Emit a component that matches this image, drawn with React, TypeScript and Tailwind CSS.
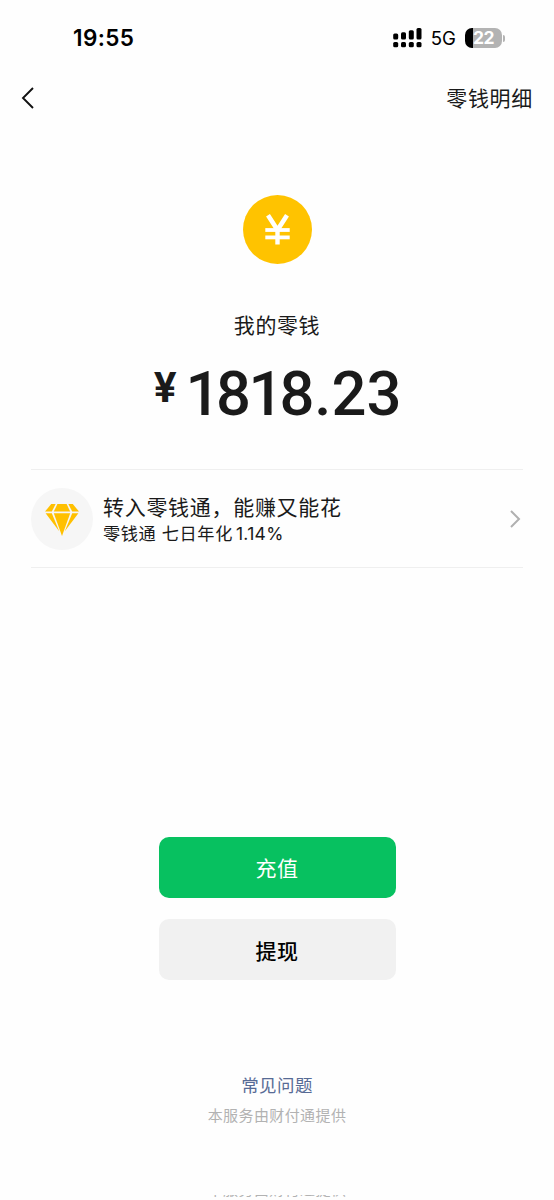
import React from 'react';

function SignalIcon() {
  return (
    <svg className="h-[20px] w-[29px] shrink-0" viewBox="0 0 29 20" fill="#000">
      <rect x="0.2" y="5.6" width="5" height="6" rx="1.5" />
      <rect x="8" y="4.2" width="5" height="7.4" rx="1.5" />
      <rect x="15.8" y="2.2" width="5" height="9.4" rx="1.5" />
      <rect x="23.5" y="0" width="5" height="11.6" rx="1.5" />
      <rect x="0.2" y="14" width="5" height="5.2" rx="1.5" />
      <rect x="8" y="14" width="5" height="5.2" rx="1.5" />
      <rect x="15.8" y="14" width="5" height="5.2" rx="1.5" />
      <rect x="23.5" y="14" width="5" height="5.2" rx="1.5" />
    </svg>
  );
}

function Battery() {
  return (
    <div className="ml-[9px] flex items-center">
      <div className="flex h-[20px] w-[37px] items-center justify-center overflow-hidden rounded-[7px] bg-[linear-gradient(to_right,#000_8px,#b3b3b3_8px)]">
        <span className="text-[17.5px] leading-none font-bold tracking-[-0.4px] text-white">22</span>
      </div>
      <div className="ml-px h-[7px] w-[2px] rounded-r-full bg-[#b3b3b3]" />
    </div>
  );
}

function StatusBar() {
  return (
    <div className="flex h-[76px] shrink-0 items-center justify-between pr-[49px] pl-[73px]">
      <span className="text-[22.5px] leading-none font-semibold tracking-[0.4px] text-black">19:55</span>
      <div className="flex items-center">
        <SignalIcon />
        <span className="ml-[9px] text-[18.6px] leading-none text-black">5G</span>
        <Battery />
      </div>
    </div>
  );
}

function CoinIcon() {
  return (
    <svg className="size-[69px]" viewBox="0 0 69 69" fill="none" stroke="#fff" strokeWidth="4.6">
      <circle cx="34.5" cy="34.5" r="34.5" fill="#ffc300" stroke="none" />
      <path d="M25 20.2L34.5 35L44 20.2" />
      <path d="M34.5 34V49.5" strokeWidth="4.4" />
      <path d="M22.3 35H46.7" strokeWidth="3.8" />
      <path d="M22.3 42.4H46.7" strokeWidth="3.8" />
    </svg>
  );
}

function DiamondIcon() {
  return (
    <svg className="mt-[3px] h-[32px] w-[34px]" viewBox="0 0 34 32" fill="#ffc000">
      <path d="M6.2 0H10.6L6.8 7.6H0Z" />
      <path d="M12.4 0H21.6L25.2 7.6H8.8Z" />
      <path d="M23.4 0H27.8L34 7.6H27.2Z" />
      <path d="M0.6 9.2H6.8L14.2 27.2Z" />
      <path d="M8.8 9.2H25.2L17 32Z" />
      <path d="M27.2 9.2H33.4L19.8 27.2Z" />
    </svg>
  );
}

export default function App() {
  return (
    <div className="flex h-[1200px] w-[554px] flex-col overflow-hidden bg-[#fefefe] font-[Inter,'Noto_Sans_CJK_SC',sans-serif] text-[#1a1a1a]">
      <StatusBar />

      <header className="flex h-[44px] shrink-0 items-center justify-between px-[21px]">
        <svg className="h-[22px] w-[14px]" viewBox="0 0 14 22" fill="none" stroke="#111" strokeWidth="1.9">
          <path d="M12 1L2 11L12 21" />
        </svg>
        <span className="text-[21px] leading-none tracking-[0.7px]">零钱明细</span>
      </header>

      <div className="mt-[75px] flex flex-col items-center">
        <CoinIcon />
        <div className="mt-[46px] h-[32px] text-[21px] leading-[32px] tracking-[0.6px]">我的零钱</div>
        <div className="mt-[19px] flex h-[66px] w-[247px] items-start">
          <span className="mt-[6px] w-[32px] shrink-0 text-[41px] leading-none font-bold">¥</span>
          <div className="font-[Roboto,sans-serif] text-[61.5px] leading-[66px] font-medium whitespace-nowrap">
            <span className="tracking-[-4.5px]">1</span>
            <span className="tracking-[-2.5px]">8</span>
            <span className="tracking-[-4px]">1</span>
            <span>8.23</span>
          </div>
        </div>
      </div>

      <div className="mx-[31px] mt-[42px] flex h-[99px] shrink-0 items-center border-y border-[#efefef]">
        <div className="flex size-[62px] items-center justify-center rounded-full bg-[#f6f6f6]">
          <DiamondIcon />
        </div>
        <div className="ml-[10px] flex-1 pt-[2px]">
          <div className="text-[21px] leading-[28px] tracking-[0.7px]">转入零钱通，能赚又能花</div>
          <div className="text-[17.2px] leading-[24px] tracking-[0.6px]">
            零钱通 七日年化<span className="ml-[3px] text-[17.5px] tracking-[0.3px]">1.14%</span>
          </div>
        </div>
        <svg className="mr-[2px] h-[18px] w-[11px]" viewBox="0 0 11 18" fill="none" stroke="#b0b0b0" strokeWidth="2">
          <path d="M1 1L9 9L1 17" />
        </svg>
      </div>

      <div className="mt-[269px] flex flex-col items-center gap-[21px]">
        <button className="h-[61px] w-[237px] rounded-[10px] bg-[#07c160] pt-[3px] text-[21px] tracking-[0.6px] text-white">
          充值
        </button>
        <button className="h-[61px] w-[237px] rounded-[10px] bg-[#f1f1f1] pt-[4px] text-[21px] font-medium tracking-[0.6px] text-black">
          提现
        </button>
      </div>

      <footer className="mt-[93px] flex flex-col items-center">
        <a className="text-[17.5px] leading-[26px] tracking-[0.4px] text-[#576b95]">常见问题</a>
        <p className="mt-[5px] text-[15px] leading-[24px] tracking-[0.4px] text-[#b2b2b2]">本服务由财付通提供</p>
        <div className="mt-[67px] flex h-[4px] items-end overflow-hidden">
          <p className="text-[15px] leading-[19px] tracking-[0.4px] text-[#b2b2b2]">本服务由财付通提供</p>
        </div>
      </footer>
    </div>
  );
}
